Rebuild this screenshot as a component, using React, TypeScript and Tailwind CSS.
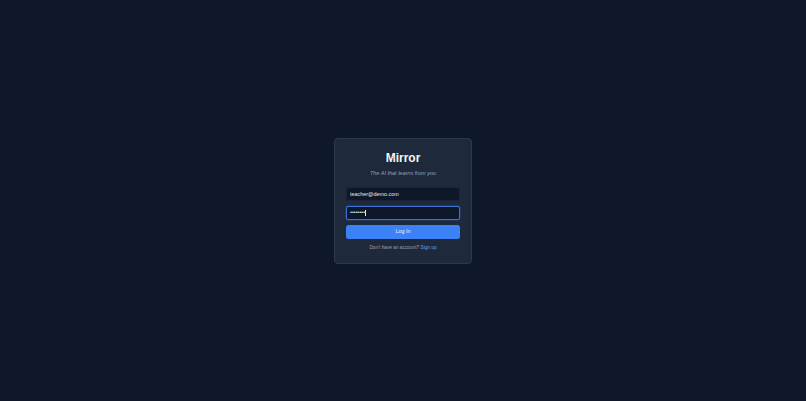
import React from "react";

export default function App() {
  return (
    <div
      className="w-full h-screen bg-[#0f172a] flex items-center justify-center"
      style={{ fontFamily: '"Liberation Sans", Arial, sans-serif' }}
    >
      <div className="w-[138px] bg-[#1e293b] border border-[#2c3a50] rounded-[4px] px-[11px] pt-[12px] pb-[12px] flex flex-col">
        <h1 className="text-[12px] leading-[14px] font-bold text-[#f1f5f9] text-center">Mirror</h1>
        <p className="mt-[5px] text-[5.5px] leading-[7px] italic text-[#94a3b8] text-center">
          The AI that learns from you
        </p>
        <form className="mt-[10px] flex flex-col gap-[4.5px]" onSubmit={(e) => e.preventDefault()}>
          <input
            type="email"
            defaultValue="teacher@demo.com"
            className="h-[14.5px] w-full rounded-[2px] bg-[#0f172a] border border-[#1a2436] px-[3px] text-[5.4px] text-[#e2e8f0] outline-none"
          />
          <div className="h-[14.5px] w-full rounded-[2px] bg-[#0f172a] border border-[#3b6fd4] shadow-[0_0_0_0.5px_rgba(59,130,246,0.35)] px-[3px] flex items-center text-[5.4px] text-[#e2e8f0]">
            <span className="leading-none">••••••••</span>
            <span className="inline-block w-[0.6px] h-[5.5px] bg-[#e2e8f0]" />
          </div>
          <button
            type="submit"
            className="h-[14.5px] w-full rounded-[2.5px] bg-[#3b82f6] text-[#eff6ff] text-[5.4px] leading-none flex items-center justify-center"
          >
            Log In
          </button>
        </form>
        <p className="mt-[5.5px] text-[4.75px] leading-[6px] text-[#94a3b8] text-center">
          Don't have an account? <span className="text-[#60a5fa]">Sign up</span>
        </p>
      </div>
    </div>
  );
}
